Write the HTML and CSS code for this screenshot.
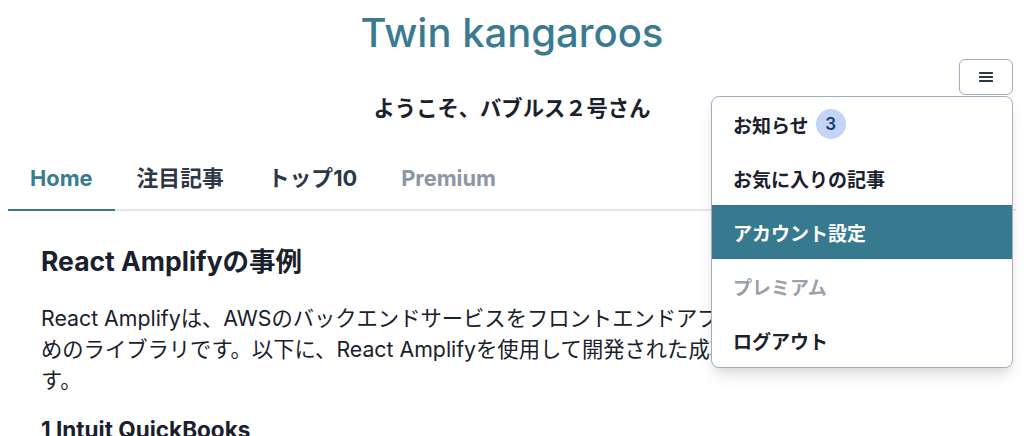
FILE: index.html
```html
<!DOCTYPE html>
<html lang="ja">

<head>
    <meta charset="UTF-8">
    <meta name="viewport" content="width=device-width, initial-scale=1.0">
    <title>Twin kangaroos</title>
    <link rel="stylesheet" href="styles.css">
</head>

<body>
    <header class="header">
        <h1 class="site-title">Twin kangaroos</h1>
        <div class="toolbar">
            <div class="menu-wrap">
                <button class="menu-button" aria-label="メニュー">
                    <svg width="16" height="16" viewBox="0 0 16 16">
                        <rect x="1" y="3" width="14" height="2" rx="0.5" fill="#2d3748" />
                        <rect x="1" y="7" width="14" height="2" rx="0.5" fill="#2d3748" />
                        <rect x="1" y="11" width="14" height="2" rx="0.5" fill="#2d3748" />
                    </svg>
                </button>
                <ul class="menu-list">
                    <li class="menu-item">お知らせ <span class="badge">3</span></li>
                    <li class="menu-item">お気に入りの記事</li>
                    <li class="menu-item active">アカウント設定</li>
                    <li class="menu-item disabled">プレミアム</li>
                    <li class="menu-item">ログアウト</li>
                </ul>
            </div>
        </div>
        <p class="greeting">ようこそ、バブルス２号さん</p>
    </header>

    <nav class="tabs">
        <button class="tab selected">Home</button>
        <button class="tab">注目記事</button>
        <button class="tab">トップ10</button>
        <button class="tab disabled">Premium</button>
    </nav>

    <main class="panel">
        <h2 class="article-title">React Amplifyの事例</h2>
        <p class="article-text">React Amplifyは、AWSのバックエンドサービスをフロントエンドアプリケーションに統合するためのライブラリです。以下に、React Amplifyを使用して開発された成功事例をいくつか紹介します。</p>
        <h3 class="case-title">1 Intuit QuickBooks</h3>
    </main>
</body>

</html>
```

FILE: styles.css
```css
body {
    margin: 0;
    font-family: Inter, "Noto Sans CJK JP", sans-serif;
    color: #1a202c;
    background: #fff;
}
.header {
    text-align: center;
}
.site-title {
    margin: 0;
    padding-top: 9px;
    font-size: 40px;
    line-height: 48px;
    font-weight: 500;
    color: #3a7b91;
}
.toolbar {
    display: flex;
    justify-content: flex-end;
    padding: 2px 11px 0 0;
}
.menu-wrap {
    position: relative;
}
.menu-button {
    display: flex;
    align-items: center;
    justify-content: center;
    width: 54px;
    height: 36px;
    background: #fff;
    border: 1px solid #a0aec0;
    border-radius: 6px;
    padding: 0;
    cursor: pointer;
}
.menu-list {
    position: absolute;
    top: 37px;
    right: 0;
    z-index: 10;
    width: 300px;
    margin: 0;
    padding: 0;
    list-style: none;
    text-align: left;
    background: #fff;
    border: 1px solid #a0aec0;
    border-radius: 8px;
    overflow: hidden;
    box-shadow: 0 10px 15px -3px rgba(0, 0, 0, 0.12), 0 4px 6px -2px rgba(0, 0, 0, 0.06);
}
.menu-item {
    display: flex;
    align-items: center;
    height: 54px;
    padding: 0 21px;
    font-size: 19px;
    font-weight: 700;
    color: #1a202c;
}
.menu-item.active {
    background: #377a8f;
    color: #fff;
}
.menu-item.disabled {
    color: #9aa1ab;
}
.badge {
    display: inline-flex;
    align-items: center;
    justify-content: center;
    width: 30px;
    height: 30px;
    margin-left: 7px;
    border-radius: 50%;
    background: #c4d4f6;
    color: #1c3a78;
    font-size: 17px;
    font-weight: 600;
}
.greeting {
    margin: -2px 0 0;
    font-size: 21.3px;
    line-height: 30px;
    font-weight: 700;
}
.tabs {
    display: flex;
    margin: 24px 8px 0;
    border-bottom: 2px solid #e2e8f0;
}
.tab {
    margin-bottom: -2px;
    padding: 16px 22px;
    background: none;
    border: none;
    border-bottom: 2px solid transparent;
    font-family: inherit;
    font-size: 21.8px;
    line-height: 30px;
    font-weight: 700;
    color: #2d3748;
    cursor: pointer;
}
.tab.selected {
    color: #3a7b91;
    border-bottom-color: #3a7b91;
}
.tab.disabled {
    color: #8d96a4;
    cursor: not-allowed;
}
.panel {
    padding: 34px 43px 0 41px;
}
.article-title {
    margin: 0 0 26px;
    font-size: 26.5px;
    line-height: 32px;
    font-weight: 700;
}
.article-text {
    margin: 0 0 19px;
    font-size: 21.3px;
    line-height: 31px;
}
.case-title {
    margin: 0;
    font-size: 22.5px;
    line-height: 30px;
    font-weight: 700;
}
```
